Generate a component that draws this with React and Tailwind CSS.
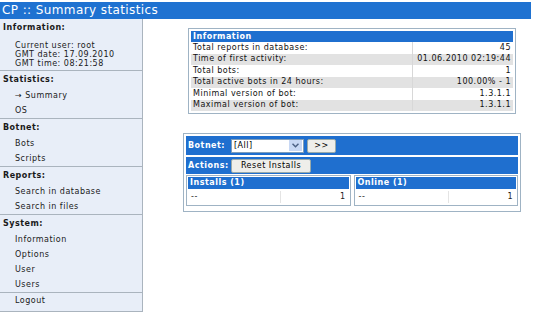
import React from 'react';

const font = { fontFamily: '"DejaVu Sans", Verdana, sans-serif' };

const menu = [
  { title: 'Statistics:', items: ['→ Summary', 'OS'] },
  { title: 'Botnet:', items: ['Bots', 'Scripts'] },
  { title: 'Reports:', items: ['Search in database', 'Search in files'] },
  { title: 'System:', items: ['Information', 'Options', 'User', 'Users'] },
];

const info = [
  ['Total reports in database:', '45'],
  ['Time of first activity:', '01.06.2010 02:19:44'],
  ['Total bots:', '1'],
  ['Total active bots in 24 hours:', '100.00% - 1'],
  ['Minimal version of bot:', '1.3.1.1'],
  ['Maximal version of bot:', '1.3.1.1'],
];

function SmallTable({ title }) {
  return (
    <div className="flex-1 border border-[#9fb3c4] p-[1px]">
      <div className="h-[12px] bg-[#1f6fcf] pl-[2px] text-[8px] leading-[12px] font-bold text-white">{title}</div>
      <div className="flex h-[15px] items-center text-[8px] text-[#222]">
        <div className="w-[93px] border-r border-[#e4e4e4] pl-[3px]">--</div>
        <div className="flex-1 pr-[3px] text-right">1</div>
      </div>
    </div>
  );
}

export default function App() {
  return (
    <div className="relative h-[316px] w-[533px] overflow-hidden bg-white tracking-[0.5px] text-[#111]" style={font}>
      {/* title bar */}
      <div className="mt-[2px] mr-[2px] h-[17px] bg-[#1f72d1] pl-[2px] text-[12px] leading-[17px] tracking-[0.4px] text-white">
        CP :: Summary statistics
      </div>

      <div className="flex">
        {/* side menu */}
        <aside className="h-[293px] w-[143px] border-r border-b border-[#aab4be] bg-[#e8eef8] text-[8px] text-[#1a1a1a]">
          <div className="border-b border-[#aab4be] pb-[2px]">
            <div className="h-[17px] pl-[3px] pt-[1px] leading-[16px] font-bold">Information:</div>
            <div className="pt-[5px] pl-[15px] leading-[9px]">
              <div>Current user: root</div>
              <div>GMT date: 17.09.2010</div>
              <div>GMT time: 08:21:58</div>
            </div>
          </div>
          {menu.map((sec) => (
            <div key={sec.title} className="border-b border-[#aab4be]">
              <div className="h-[17px] pl-[3px] pt-[1px] leading-[15px] font-bold">{sec.title}</div>
              {sec.items.map((it) => (
                <div key={it} className="h-[15px] pl-[15px] leading-[15px]">{it}</div>
              ))}
            </div>
          ))}
          <div className="h-[16px] pl-[15px] leading-[16px]">Logout</div>
        </aside>

        {/* content */}
        <main className="flex-1">
          <div className="mt-[9px] ml-[45px] w-[328px] border border-[#9fb3c4] p-[2px]">
            <div className="h-[11px] bg-[#1f6fcf] pl-[2px] text-[8px] leading-[11px] font-bold text-white">Information</div>
            {info.map(([k, v], i) => (
              <div key={k} className={`flex h-[11.5px] items-center text-[8px] ${i % 2 ? 'bg-[#e2e2e2]' : 'bg-white'}`}>
                <div className="w-[222px] border-r border-[#d8d8d8] pl-[2px]">{k}</div>
                <div className="flex-1 pr-[2px] text-right">{v}</div>
              </div>
            ))}
          </div>

          <div className="mt-[19px] ml-[40px] w-[338px] border border-[#9fb3c4] p-[2px] pb-[5px]">
            <div className="flex h-[19px] items-center gap-[2px] bg-[#1f6fcf] pl-[2px] text-[8px] font-bold text-white">
              <span className="w-[41px]">Botnet:</span>
              <div className="flex h-[14px] w-[73px] items-center border border-[#7f9db9] bg-white pl-[2px] font-normal text-black">
                <span className="flex-1">[All]</span>
                <span className="m-[1px] flex h-[11px] w-[13px] items-center justify-center bg-[#c8d8f4]">
                  <svg width="7" height="5" viewBox="0 0 7 5"><path d="M0.5 0.8 L3.5 3.8 L6.5 0.8" stroke="#4d6185" strokeWidth="1.5" fill="none" /></svg>
                </span>
              </div>
              <div className="ml-[1px] flex h-[14px] w-[29px] items-center justify-center rounded-[2px] border border-[#9aa] bg-[#eeeeea] font-normal text-black">&gt;&gt;</div>
            </div>
            <div className="mt-[2px] flex h-[17px] items-center gap-[2px] bg-[#1f6fcf] pl-[2px] text-[8px] font-bold text-white">
              <span className="w-[41px]">Actions:</span>
              <div className="flex h-[14px] w-[80px] items-center justify-center rounded-[2px] border border-[#9aa] bg-[#eeeeea] font-normal text-black">Reset Installs</div>
            </div>
            <div className="mt-[1px] flex gap-[3px]">
              <SmallTable title="Installs (1)" />
              <SmallTable title="Online (1)" />
            </div>
          </div>
        </main>
      </div>
    </div>
  );
}
